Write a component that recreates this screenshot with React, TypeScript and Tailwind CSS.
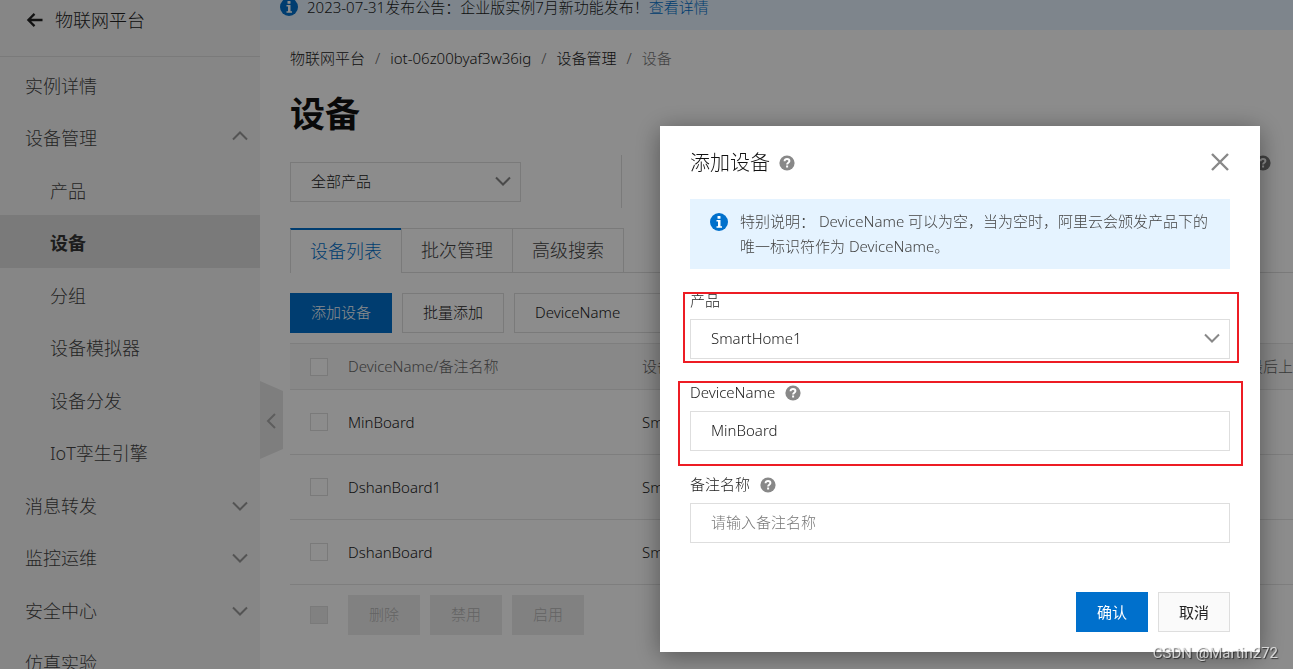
import { ReactNode } from "react";
import clsx from "clsx";

type TNavItem = {
  title: string;
  nested?: boolean;
  active?: boolean;
  arrow?: "up" | "down";
};

const NAV_ITEMS: TNavItem[] = [
  { title: "实例详情" },
  { title: "设备管理", arrow: "up" },
  { title: "产品", nested: true },
  { title: "设备", nested: true, active: true },
  { title: "分组", nested: true },
  { title: "设备模拟器", nested: true },
  { title: "设备分发", nested: true },
  { title: "IoT孪生引擎", nested: true },
  { title: "消息转发", arrow: "down" },
  { title: "监控运维", arrow: "down" },
  { title: "安全中心", arrow: "down" },
  { title: "仿真实验" },
];

const TABS = ["设备列表", "批次管理", "高级搜索"];
const DEVICES = ["MinBoard", "DshanBoard1", "DshanBoard"];
const BATCH_ACTIONS = ["删除", "禁用", "启用"];

const Chevron = ({ className }: { className?: string }) => (
  <svg
    viewBox="0 0 16 10"
    className={clsx("w-4 h-[10px] shrink-0 pointer-events-none", className)}
    fill="none"
    stroke="currentColor"
    strokeWidth="2"
    aria-hidden="true"
  >
    <path d="M1 1.5l7 7 7-7" />
  </svg>
);

const InfoIcon = ({ className }: { className?: string }) => (
  <svg
    viewBox="0 0 18 18"
    className={clsx("size-[18px] shrink-0", className)}
    aria-hidden="true"
  >
    <circle cx="9" cy="9" r="9" fill="#0070cc" />
    <rect x="7.5" y="3" width="3" height="2.8" rx="0.6" fill="#fff" />
    <path d="M6.5 7h4v6.2h1.5v1.6h-5.500v-1.600h1.500V8.600h-1.500z" fill="#fff" />
  </svg>
);

const HelpIcon = ({ className }: { className?: string }) => (
  <svg
    viewBox="0 0 16 16"
    className={clsx("size-4 shrink-0", className)}
    aria-hidden="true"
  >
    <circle cx="8" cy="8" r="7.6" fill="currentColor" />
    <path
      d="M5.6 6.200c0-1.400 1-2.200 2.400-2.200s2.400.8 2.400 2.100c0 1.700-2.300 1.700-2.300 3.400"
      fill="none"
      stroke="#fff"
      strokeWidth="2"
    />
    <rect x="7.100" y="10.500" width="2" height="2" fill="#fff" />
  </svg>
);

const Checkbox = ({ label, disabled }: { label: string; disabled?: boolean }) => (
  <input
    type="checkbox"
    aria-label={label}
    disabled={disabled}
    className={clsx(
      "block appearance-none size-[18px] border border-[#dedede]",
      disabled ? "bg-[#ebebeb]" : "bg-white",
    )}
  />
);

const Sidebar = () => (
  <aside className="w-[260px] shrink-0 bg-[#f5f5f5] text-lg text-[#444]">
    <div className="h-[57px] pb-4 pl-[26px] flex items-center gap-x-3 border-b border-[#dedede] text-[#222]">
      <svg
        viewBox="0 0 18 16"
        className="w-[17px] h-4"
        fill="none"
        stroke="currentColor"
        strokeWidth="2.400"
        aria-hidden="true"
      >
        <path d="M17.500 8H2.500M9 1.500L2.500 8l6.500 6.500" />
      </svg>
      <a href="#">物联网平台</a>
    </div>
    <nav className="pt-px">
      {NAV_ITEMS.map(({ title, nested, active, arrow }) => (
        <a
          key={title}
          href="#"
          className={clsx(
            "flex items-center justify-between pt-[3px] pr-3 odd:h-[52px] even:h-[53px]",
            nested ? "pl-[50px]" : "pl-[25px]",
            active && "bg-[#dedede] font-bold text-[#333]",
          )}
        >
          {title}
          {arrow && (
            <Chevron
              className={clsx("text-[#999]", arrow === "up" && "mb-1 rotate-180")}
            />
          )}
        </a>
      ))}
    </nav>
  </aside>
);

const DeviceTable = () => (
  <table className="w-full min-w-[1100px] table-fixed text-left text-[#222]">
    <colgroup>
      <col className="w-[58px]" />
      <col className="w-[294px]" />
      <col className="w-[606px]" />
      <col />
    </colgroup>
    <thead>
      <tr className="h-[46px] bg-[#f7f7f7] border-y border-[#e5e5e5] text-[#666]">
        <th className="pl-5">
          <Checkbox label="全选" />
        </th>
        <th className="font-light">DeviceName/备注名称</th>
        <th className="font-light">设备所属产品</th>
        <th className="font-light">最后上线时间</th>
      </tr>
    </thead>
    <tbody>
      {DEVICES.map((name) => (
        <tr key={name} className="h-[65px] border-b border-[#e5e5e5]">
          <td className="pl-5">
            <Checkbox label={name} />
          </td>
          <td>{name}</td>
          <td>SmartHome1</td>
          <td />
        </tr>
      ))}
    </tbody>
  </table>
);

const DevicePage = () => (
  <main className="flex-1 min-w-0 overflow-hidden text-[#222]">
    <div className="h-[30px] pb-4 pl-5 flex items-center bg-[#e5f3ff]">
      <InfoIcon className="mr-[9px]" />
      <p className="whitespace-nowrap">
        2023-07-31发布公告：企业版实例7月新功能发布！
        <a href="#" className="text-[#0070cc]">
          查看详情
        </a>
      </p>
    </div>

    <div className="pl-[30px]">
      <nav className="pt-4 flex items-center gap-x-[10px] leading-[25px]">
        <a href="#">物联网平台</a>
        <span className="text-[#666]">/</span>
        <a href="#">iot-06z00byaf3w36ig</a>
        <span className="text-[#666]">/</span>
        <a href="#">设备管理</a>
        <span className="text-[#666]">/</span>
        <span className="text-[#777]">设备</span>
      </nav>

      <h1 className="mt-[18px] text-[35px] leading-[50px] font-bold text-[#111]">
        设备
      </h1>

      <div className="mt-4 h-[53px] flex">
        <div className="relative mt-[7px] w-[231px] h-10">
          <select
            aria-label="产品筛选"
            className="appearance-none size-full px-5 pb-0.5 border border-[#dedede]"
          >
            <option>全部产品</option>
          </select>
          <Chevron className="absolute right-[10px] top-[14px] text-[#888]" />
        </div>
        <div className="ml-[100px] flex-1 flex justify-end border-l border-[#dedede] pr-[22px]">
          <HelpIcon className="text-[#777]" />
        </div>
      </div>

      <div role="tablist" className="mt-5 flex text-lg text-[#444]">
        {TABS.map((tab, index) => (
          <button
            key={tab}
            role="tab"
            aria-selected={index === 0}
            className={clsx(
              "h-[45px] px-5 pb-0.5 border-[#dedede] w-[111px] whitespace-nowrap flex items-center justify-center",
              index === 0
                ? "border-l border-t-2 border-t-[#0070cc] text-[#0070cc]"
                : "border-y border-l",
            )}
          >
            {tab}
          </button>
        ))}
        <div className="flex-1 border-l border-b border-[#dedede]" />
      </div>

      <div className="mt-5 mb-[10px] flex gap-x-[10px]">
        <button className="w-[102px] h-10 pb-0.5 bg-[#0070cc] text-white">
          添加设备
        </button>
        <button className="w-[102px] h-10 pb-0.5 border border-[#dedede]">
          批量添加
        </button>
        <select
          aria-label="搜索条件"
          className="appearance-none w-[200px] h-10 px-5 pb-0.5 border border-[#dedede]"
        >
          <option>DeviceName</option>
        </select>
      </div>

      <DeviceTable />

      <div className="mt-[10px] pl-5 flex items-center gap-x-[10px]">
        <div className="mr-[10px]">
          <Checkbox label="选择全部设备" disabled />
        </div>
        {BATCH_ACTIONS.map((action) => (
          <button
            key={action}
            disabled
            className="w-[72px] h-10 pb-0.5 bg-[#ebebeb] text-[#b5b5b5]"
          >
            {action}
          </button>
        ))}
      </div>
    </div>

    <button
      aria-label="收起菜单"
      className="absolute left-[260px] top-[381px] text-[#aaa]"
    >
      <svg viewBox="0 0 23 78" className="w-[23px] h-[78px]" fill="none">
        <path d="M0 0l23 10v58L0 78z" fill="#e6e6e6" />
        <path d="M15 33l-7 7 7 7" stroke="currentColor" strokeWidth="2" />
      </svg>
    </button>
  </main>
);

type TField = {
  id: string;
  label: string;
  help?: boolean;
  // position of the red frame drawn around the field
  frame?: string;
  children: ReactNode;
};

const Field = ({ id, label, help, frame, children }: TField) => (
  <div className="relative">
    <div className="h-[25px] pb-0.5 mb-[5px] flex items-center gap-x-[10px]">
      <label htmlFor={id}>{label}</label>
      {help && <HelpIcon className="text-[#888]" />}
    </div>
    {children}
    {frame && (
      <div
        className={clsx(
          "absolute border-2 border-[#ed1c24] pointer-events-none",
          frame,
        )}
      />
    )}
  </div>
);

const AddDeviceDialog = () => (
  <div className="fixed inset-0 bg-black/45 flex items-start justify-end pt-[126px] pr-[33px]">
    <div
      role="dialog"
      aria-labelledby="dialog-title"
      className="w-[600px] px-[30px] pb-5 bg-white text-[#222] shadow-[0_4px_24px_rgba(0,0,0,0.4)]"
    >
      <div className="h-[73px] flex items-center">
        <h2 id="dialog-title" className="text-xl text-[#111]">
          添加设备
        </h2>
        <HelpIcon className="ml-[9px] text-[#888]" />
        <button aria-label="关闭" className="ml-auto pb-0.5 text-[#888]">
          <svg
            viewBox="0 0 20 20"
            className="size-5"
            fill="none"
            stroke="currentColor"
            strokeWidth="2.400"
          >
            <path d="M2 2l16 16M18 2L2 18" />
          </svg>
        </button>
      </div>

      <div className="mb-5 px-5 py-[10px] flex gap-x-3 bg-[#e5f3ff] text-[#444]">
        <InfoIcon className="mt-1" />
        <p className="leading-[25px]">
          特别说明： DeviceName
          可以为空，当为空时，阿里云会颁发产品下的唯一标识符作为 DeviceName。
        </p>
      </div>

      <form className="flex flex-col gap-y-[22px]">
        <Field
          id="product"
          label="产品"
          frame="-left-[7px] -right-[9px] top-[3px] -bottom-1"
        >
          <div className="relative">
            <select
              id="product"
              className="block appearance-none w-full h-10 px-5 pb-0.5 border border-[#dedede]"
            >
              <option>SmartHome1</option>
            </select>
            <Chevron className="absolute right-[10px] top-[14px] text-[#888]" />
          </div>
        </Field>
        <Field
          id="device-name"
          label="DeviceName"
          help
          frame="-left-3 -right-[13px] top-0 -bottom-[15px]"
        >
          <input
            id="device-name"
            defaultValue="MinBoard"
            className="block w-full h-10 px-5 pb-0.5 border border-[#dedede]"
          />
        </Field>
        <Field id="remark" label="备注名称" help>
          <input
            id="remark"
            placeholder="请输入备注名称"
            className="block w-full h-10 px-5 pb-0.5 border border-[#dedede] placeholder:text-[#777]"
          />
        </Field>
      </form>

      <div className="mt-[49px] flex justify-end gap-x-[10px]">
        <button className="w-[72px] h-10 bg-[#0070cc] font-normal text-white">
          确认
        </button>
        <button className="w-[72px] h-10 border border-[#dedede] bg-[#fafafa] font-normal">
          取消
        </button>
      </div>
    </div>
  </div>
);

const App = () => (
  <div className="relative h-screen overflow-hidden flex items-stretch bg-white font-['Noto_Sans','Noto_Sans_CJK_SC',sans-serif] text-[15px] font-light">
    <Sidebar />
    <DevicePage />
    <AddDeviceDialog />
    <p className="fixed right-[15px] bottom-[6px] font-['Roboto','Liberation_Sans',sans-serif] text-[15px] leading-5 font-normal text-white/70 [text-shadow:1px_1px_1px_rgba(0,0,0,0.6)]">
      CSDN @Martin272
    </p>
  </div>
);

export default App;
